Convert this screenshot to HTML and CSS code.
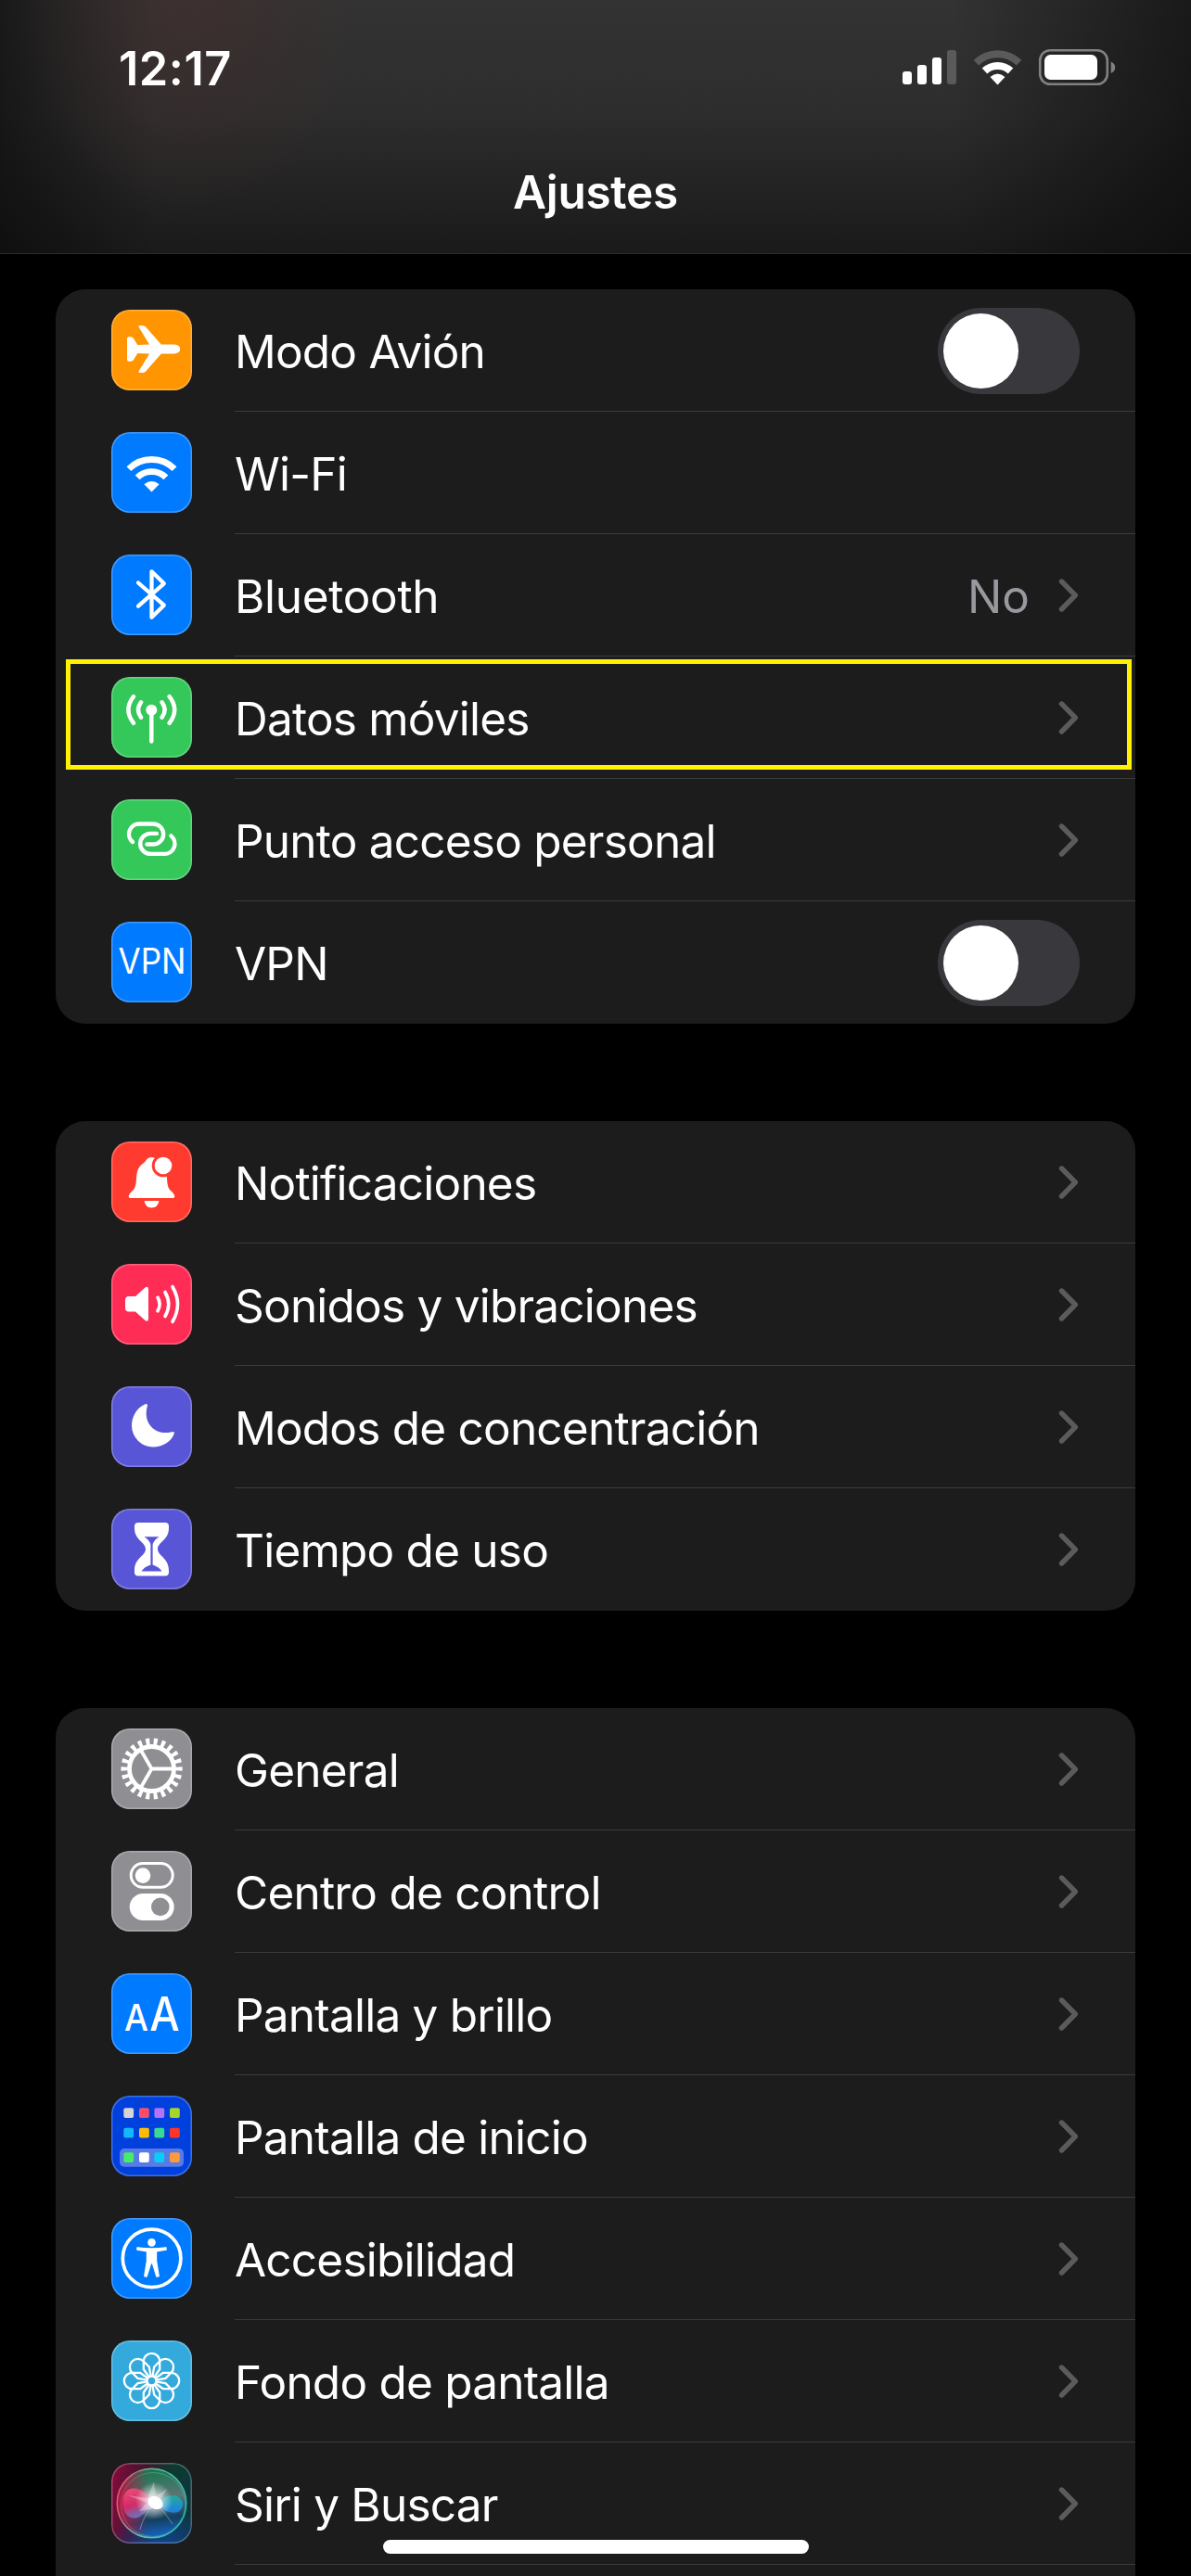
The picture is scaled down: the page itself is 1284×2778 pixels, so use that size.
FILE: index.html
```html
<!DOCTYPE html>
<html lang="es">
<head>
<meta charset="utf-8">
<title>Ajustes</title>
<link rel="stylesheet" href="styles.css">
</head>
<body>
<svg width="0" height="0" class="defs" aria-hidden="true">
  <defs>
    <symbol id="chevron" viewBox="0 0 22 38"><path d="M3.5 4 18.3 19 3.5 34" fill="none" stroke="#5b5b5d" stroke-width="5.4" stroke-linecap="round" stroke-linejoin="round"/></symbol>
    <path id="petal" d="M40.7 39.4 34.8 31V22.5A8.7 8.7 0 0 1 52.2 22.5V31L46.3 39.4"/>
  </defs>
</svg>
<header class="header">
  <div class="status">
    <span class="time">12:17</span>
    <svg class="status-icons" width="232" height="44" viewBox="971 50 232 44">
      <g fill="#fff"><rect x="973" y="77" width="10" height="14" rx="3"/><rect x="989" y="70" width="10" height="21" rx="3"/><rect x="1005" y="62" width="10" height="29" rx="3"/><rect x="1021" y="54" width="10" height="37" rx="3" fill="#5a5a5a"/></g>
      <g fill="none" stroke-width="8"><path d="M1052.400 67.600A33 33 0 0 1 1098.600 67.600" stroke="#5a5a5a"/><path d="M1061.500 76.500A20.300 20.300 0 0 1 1089.500 76.500" stroke="#fff"/></g>
      <path d="M1075.500 91.500 1067.500 83Q1075.500 76 1083.500 83Z" fill="#fff"/>
      <rect x="1121.200" y="54.200" width="72.600" height="36.600" rx="11" fill="none" stroke="#818181" stroke-width="2.600"/>
      <rect x="1126" y="59" width="57" height="27" rx="6.500" fill="#fff"/>
      <path d="M1197.700 66.500Q1202.200 68.500 1202.200 72.800T1197.700 79Z" fill="#818181"/>
    </svg>
  </div>
  <h1 class="title">Ajustes</h1>
</header>
<main class="list">
  <section class="group">
    <div class="row">
      <span class="icon orange"><svg viewBox="0 0 87 87"><path fill="#fff" d="M17 31q0-1.700 1.700-1.700H21q2 0 3 1.700L28.300 38 41 37.600 29.800 19q-1-2 1-2h2.500q2.300 0 3.800 1.600L53.800 37.600H68q6.200.6 6.200 4.900T68 47.400H53.800L37.100 66.400q-1.500 1.600-3.800 1.600h-2.500q-2 0-1-2L41 47.400 28.300 47 24 54q-1 1.700-3 1.700h-2.300Q17 55.700 17 54Z"/></svg></span>
      <div class="cell"><span class="label">Modo Avión</span><span class="switch"></span></div>
    </div>
    <div class="row">
      <span class="icon blue"><svg viewBox="0 0 87 87"><g fill="none" stroke="#fff" stroke-width="6.800"><path d="M18.900 39.700A34.800 34.800 0 0 1 68.100 39.700"/><path d="M28.100 48.900A21.800 21.800 0 0 1 58.900 48.900"/></g><path fill="#fff" d="M43.500 64.500 35.400 56.300Q43.500 49.600 51.600 56.300Z"/></svg></span>
      <div class="cell"><span class="label">Wi-Fi</span></div>
    </div>
    <div class="row">
      <span class="icon blue"><svg viewBox="0 0 87 87"><path fill="none" stroke="#fff" stroke-width="4.300" stroke-linejoin="round" stroke-linecap="round" d="M29 30.500 56.800 54.700 43.500 67.700V18.300L56.800 31.300 29 55.700"/></svg></span>
      <div class="cell"><span class="label wide">Bluetooth</span><span class="value">No</span><svg class="chevron"><use href="#chevron"/></svg></div>
    </div>
    <div class="row highlighted">
      <span class="icon green"><svg viewBox="0 0 87 87"><circle cx="43.300" cy="35.700" r="6" fill="#fff"/><g fill="none" stroke="#fff" stroke-width="4.500" stroke-linecap="round"><path d="M43.300 36V69.500M32 27.300Q26 35.500 32 43.700M54.600 27.300Q60.600 35.500 54.600 43.700M24 21.200Q12.800 35.500 24 49.800M62.600 21.200Q73.800 35.500 62.600 49.800"/></g></svg></span>
      <div class="cell"><span class="label">Datos móviles</span><svg class="chevron"><use href="#chevron"/></svg></div>
    </div>
    <div class="row">
      <span class="icon green"><svg viewBox="0 0 87 87"><g fill="none" stroke="#fff" stroke-width="4.400" stroke-linecap="round"><path id="link" d="M23 46A11 11 0 0 1 30.200 26.500H45.200A11 11 0 0 1 45.200 48.500H38.500"/><use href="#link" transform="rotate(180 43.700 42.700)"/></g></svg></span>
      <div class="cell"><span class="label">Punto acceso personal</span><svg class="chevron"><use href="#chevron"/></svg></div>
    </div>
    <div class="row">
      <span class="icon blue"><svg viewBox="0 0 87 87"><text x="7.500" y="56" class="glyph" font-size="37.500" textLength="73" lengthAdjust="spacingAndGlyphs">VPN</text></svg></span>
      <div class="cell"><span class="label">VPN</span><span class="switch"></span></div>
    </div>
  </section>

  <section class="group">
    <div class="row">
      <span class="icon red"><svg viewBox="0 0 87 87"><path fill="#fff" d="M43.500 17C38 17 38 21 34.500 23.500 29 27 27.500 32 27 40 26.500 50 25 51 21 55 18.500 57.500 17.500 61 21 61H66C69.500 61 68.500 57.500 66 55 62 51 60.500 50 60 40 59.500 32 58 27 52.500 23.500 49 21 49 17 43.500 17ZM35.500 64H51.500Q50 71.600 43.500 71.600T35.500 64Z"/><circle cx="56" cy="26" r="12.300" fill="#ff3b30"/><circle cx="56" cy="26" r="9.300" fill="#fff"/></svg></span>
      <div class="cell"><span class="label">Notificaciones</span><svg class="chevron"><use href="#chevron"/></svg></div>
    </div>
    <div class="row">
      <span class="icon pink"><svg viewBox="0 0 87 87"><path fill="#fff" d="M19 35H26L36.500 25.500Q40 23.300 40 27.500V59Q40 63.200 36.500 61L26 51.600H19Q15 51.600 15 47.600V39Q15 35 19 35Z"/><path fill="none" stroke="#fff" stroke-width="3.700" stroke-linecap="round" d="M50 36.300Q54.300 43.500 50 50.700M58 30.500Q65.500 43.500 58 56.500M66 24.700Q77 43.500 66 62.300"/></svg></span>
      <div class="cell"><span class="label">Sonidos y vibraciones</span><svg class="chevron"><use href="#chevron"/></svg></div>
    </div>
    <div class="row">
      <span class="icon indigo"><svg viewBox="0 0 87 87"><path fill="#fff" d="M36 19.500Q39.700 18 38.700 22C34 38.500 46 53 64 49.500Q69 48 67.500 51.700C64 60 55 65.400 45 65.400A23 23 0 0 1 22 42.500C22 32 28 23 36 19.500Z"/></svg></span>
      <div class="cell"><span class="label">Modos de concentración</span><svg class="chevron"><use href="#chevron"/></svg></div>
    </div>
    <div class="row">
      <span class="icon indigo"><svg viewBox="0 0 87 87"><path fill="#fff" fill-rule="evenodd" d="M29 15H58Q62 15 62 19V21C62 34 50 36 50 43.500S62 53 62 66.500V68.600Q62 72.600 58 72.600H29Q25 72.600 25 68.600V66.500C25 53 37 51 37 43.500S25 34 25 21V19Q25 15 29 15ZM35.500 30.300Q41.500 34 42.400 39V60.500Q35 63 32.500 67.500H54.500Q52 63 44.600 60.500V39Q45.500 34 51.500 30.300Z"/></svg></span>
      <div class="cell"><span class="label">Tiempo de uso</span><svg class="chevron"><use href="#chevron"/></svg></div>
    </div>
  </section>

  <section class="group">
    <div class="row">
      <span class="icon gray"><svg viewBox="0 0 87 87"><g fill="none" stroke="#fff"><circle cx="43.500" cy="43.500" r="24" stroke-width="4.800"/><circle cx="43.500" cy="43.500" r="29.300" stroke-width="7.600" pathLength="220" stroke-dasharray="4.900 5.100" stroke-dashoffset="2.450"/><path stroke-width="3.800" d="M43.500 43.500H66M43.500 43.500 32.200 24M43.500 43.500 32.200 63"/></g></svg></span>
      <div class="cell"><span class="label">General</span><svg class="chevron"><use href="#chevron"/></svg></div>
    </div>
    <div class="row">
      <span class="icon gray"><svg viewBox="0 0 87 87"><rect x="21.200" y="13.500" width="45" height="25.700" rx="12.850" fill="none" stroke="#fff" stroke-width="3"/><circle cx="34" cy="26.600" r="8.300" fill="#fff"/><rect x="19.700" y="46" width="48" height="29" rx="14.500" fill="#fff"/><circle cx="52.800" cy="60.400" r="9.800" fill="#8e8e93"/></svg></span>
      <div class="cell"><span class="label">Centro de control</span><svg class="chevron"><use href="#chevron"/></svg></div>
    </div>
    <div class="row">
      <span class="icon blue"><svg viewBox="0 0 87 87"><text x="14" y="62" class="glyph medium" font-size="39.500" textLength="26" lengthAdjust="spacingAndGlyphs">A</text><text x="41.200" y="62" class="glyph medium" font-size="51" textLength="32.500" lengthAdjust="spacingAndGlyphs">A</text></svg></span>
      <div class="cell"><span class="label">Pantalla y brillo</span><svg class="chevron"><use href="#chevron"/></svg></div>
    </div>
    <div class="row">
      <span class="icon royal"><svg viewBox="0 0 87 87"><rect x="9" y="57" width="69" height="19.700" rx="5" fill="#587be5"/>
        <rect x="13.300" y="13.300" width="10.800" height="10.800" rx="2" fill="#d5d5d5"/><rect x="30" y="13.300" width="10.800" height="10.800" rx="2" fill="#fb4d69"/><rect x="46.400" y="13.300" width="10.800" height="10.800" rx="2" fill="#b273f8"/><rect x="63" y="13.300" width="10.800" height="10.800" rx="2" fill="#a8d42b"/>
        <rect x="13.300" y="34.800" width="10.800" height="10.800" rx="2" fill="#16b8fc"/><rect x="30" y="34.800" width="10.800" height="10.800" rx="2" fill="#fdbd05"/><rect x="46.400" y="34.800" width="10.800" height="10.800" rx="2" fill="#3bd794"/><rect x="63" y="34.800" width="10.800" height="10.800" rx="2" fill="#fb3528"/>
        <rect x="13.300" y="61.300" width="10.800" height="10.800" rx="2" fill="#43ef68"/><rect x="30" y="61.300" width="10.800" height="10.800" rx="2" fill="#fff"/><rect x="46.400" y="61.300" width="10.800" height="10.800" rx="2" fill="#0acdf6"/><rect x="63" y="61.300" width="10.800" height="10.800" rx="2" fill="#fc9a3c"/></svg></span>
      <div class="cell"><span class="label">Pantalla de inicio</span><svg class="chevron"><use href="#chevron"/></svg></div>
    </div>
    <div class="row">
      <span class="icon blue"><svg viewBox="0 0 87 87"><circle cx="43.600" cy="43.400" r="31.300" fill="none" stroke="#fff" stroke-width="3.700"/><circle cx="43.500" cy="26.400" r="4.300" fill="#fff"/><path fill="#fff" stroke="#fff" stroke-width="1.200" stroke-linejoin="round" d="M27.900 31.800Q43.500 34 59.100 31.800V34.200L48.600 35.800V46L51.300 62.600 48.900 63.200 44.300 48.600H42.700L38.100 63.200 35.700 62.600 38.400 46V35.800L27.900 34.200Z"/></svg></span>
      <div class="cell"><span class="label">Accesibilidad</span><svg class="chevron"><use href="#chevron"/></svg></div>
    </div>
    <div class="row">
      <span class="icon sky"><svg viewBox="0 0 87 87"><g fill="none" stroke="#fff" stroke-width="2.300" stroke-linejoin="round"><circle cx="43.500" cy="43.500" r="4.900"/><use href="#petal"/><use href="#petal" transform="rotate(45 43.500 43.500)"/><use href="#petal" transform="rotate(90 43.500 43.500)"/><use href="#petal" transform="rotate(135 43.500 43.500)"/><use href="#petal" transform="rotate(180 43.500 43.500)"/><use href="#petal" transform="rotate(225 43.500 43.500)"/><use href="#petal" transform="rotate(270 43.500 43.500)"/><use href="#petal" transform="rotate(315 43.500 43.500)"/></g></svg></span>
      <div class="cell"><span class="label">Fondo de pantalla</span><svg class="chevron"><use href="#chevron"/></svg></div>
    </div>
    <div class="row">
      <span class="icon siri"><svg viewBox="0 0 87 87">
        <defs>
          <linearGradient id="rim" x1="0" y1=".3" x2="1" y2=".6"><stop offset="0" stop-color="#f04a70"/><stop offset=".45" stop-color="#5fc79a"/><stop offset="1" stop-color="#2fb7b0"/></linearGradient>
          <linearGradient id="orb" x1=".4" y1="0" x2=".55" y2="1"><stop offset="0" stop-color="#14784f"/><stop offset=".45" stop-color="#5c7474"/><stop offset=".75" stop-color="#14405f"/><stop offset="1" stop-color="#1765c9"/></linearGradient>
          <linearGradient id="orbleft"><stop offset="0" stop-color="#b51445"/><stop offset=".45" stop-color="#b51445" stop-opacity="0"/></linearGradient>
          <radialGradient id="flare"><stop offset="0" stop-color="#fff"/><stop offset=".25" stop-color="#fff" stop-opacity=".95"/><stop offset="1" stop-color="#fff" stop-opacity="0"/></radialGradient>
          <linearGradient id="lobe" x2=".3" y2="1"><stop offset="0" stop-color="#ff5483"/><stop offset=".6" stop-color="#df2868"/><stop offset="1" stop-color="#6b7ccf"/></linearGradient>
          <linearGradient id="lobe2" x2="0" y2="1"><stop offset="0" stop-color="#24a89d"/><stop offset="1" stop-color="#1b80e4"/></linearGradient>
        </defs>
        <circle cx="43.500" cy="43.500" r="37" fill="url(#orb)"/><circle cx="43.500" cy="43.500" r="37" fill="url(#orbleft)"/>
        <path d="M46 43C32 22 14 24 12.500 40S22 64 32 57Q39 52 46 43Z" fill="url(#lobe)" opacity=".85"/>
        <path d="M48 44C60 32 74 32 77.500 44 76 57 62 57 48 44Z" fill="url(#lobe2)"/>
        <path d="M46 44Q34 58 31 72M49 45Q58 53 66 66" stroke="#8ab8df" stroke-width="1" fill="none" opacity=".6"/>
        <circle cx="46" cy="41" r="20" fill="url(#flare)" opacity=".75"/>
        <path d="M46 20 48 36 60 28 52 41 57 47 47 49 30 52 38 43 18 35 39 38Z" fill="#fff" opacity=".3"/>
        <ellipse cx="47.500" cy="43" rx="8.500" ry="6.500" transform="rotate(28 47.500 43)" fill="#fff"/>
        <circle cx="43.500" cy="43.500" r="37.300" fill="none" stroke="url(#rim)" stroke-width="1.500"/>
        <circle cx="45" cy="45" r="34.500" fill="none" stroke="url(#rim)" stroke-width="1" opacity=".5"/>
      </svg></span>
      <div class="cell"><span class="label">Siri y Buscar</span><svg class="chevron"><use href="#chevron"/></svg></div>
    </div>
    <div class="row"></div>
  </section>
</main>
<div class="home-indicator"></div>
</body>
</html>
```
FILE: styles.css
```css
*,
*::before,
*::after { box-sizing: border-box; }

body {
  position: relative;
  display: flex;
  flex-direction: column;
  width: 1284px;
  height: 2778px;
  margin: 0;
  overflow: hidden;
  background: #000;
  color: #fff;
  font-family: Inter, "Liberation Sans", sans-serif;
}

.defs { display: none; }

.header {
  flex: none;
  display: flex;
  flex-direction: column;
  height: 274px;
  border-bottom: 1px solid #2b2b2b;
  background:
    radial-gradient(ellipse 190px 230px at 205px 10px, rgba(78, 42, 42, .38), transparent),
    linear-gradient(90deg, rgba(8, 8, 8, .6), rgba(8, 8, 8, 0) 13%, rgba(8, 8, 8, 0) 80%, rgba(8, 8, 8, .6)),
    linear-gradient(#333, #2d2d2d 45%, #1a1a1a);
}

.status {
  display: flex;
  align-items: center;
  justify-content: space-between;
  height: 146px;
  padding: 0 81px 0 128px;
}

.time {
  font-size: 50.5px;
  font-weight: 600;
  letter-spacing: 0.5px;
}

.status-icons { margin-bottom: 2px; }

.title {
  margin: 0;
  padding-top: 31px;
  font-size: 49.5px;
  font-weight: 600;
  line-height: 60px;
  letter-spacing: -0.3px;
  text-align: center;
}

.list {
  flex: none;
  display: flex;
  flex-direction: column;
  gap: 105px;
  padding: 38px 60px 0;
}

.group {
  overflow: hidden;
  border-radius: 32px;
  background: #1c1c1c;
}

.row {
  position: relative;
  display: flex;
  align-items: center;
  gap: 46px;
  height: 132px;
  padding-left: 60px;
}

.cell {
  flex: 1;
  display: flex;
  align-items: center;
  height: 132px;
  padding-right: 60px;
  border-bottom: 1px solid #3b3b3c;
}

.row:last-child .cell { border-bottom-color: transparent; }

.label {
  flex: 1;
  padding-top: 3px;
  font-size: 49.5px;
  line-height: 60px;
  letter-spacing: -0.78px;
  white-space: nowrap;
}

.label.wide { letter-spacing: -0.3px; }

.value {
  margin-right: 31px;
  padding-top: 3px;
  color: #98989e;
  font-size: 49.5px;
  line-height: 60px;
}

.chevron {
  width: 22px;
  height: 38px;
  margin-right: 1px;
}

.icon {
  position: relative;
  flex: none;
  width: 87px;
  height: 87px;
  margin-top: -1px;
  border-radius: 20px;
  box-shadow: inset 0 0 0 1.5px rgba(255, 255, 255, .25);
}

.icon svg { display: block; width: 87px; height: 87px; }

.glyph { fill: #fff; font-family: Inter, sans-serif; }
.glyph.medium { font-weight: 500; }

.orange { background-color: #ff9500; }
.blue { background-color: #007aff; }
.green { background-color: #34c759; }
.red { background-color: #ff3b30; }
.pink { background-color: #ff2d55; }
.indigo { background-color: #5856d6; }
.gray { background-color: #8e8e93; }
.royal { background-color: #0040dd; }
.sky { background-color: #34aadc; }
.siri {
  background:
    radial-gradient(circle at 60% 115%, #1244a8, transparent 50%),
    linear-gradient(100deg, #8c0a3c, #42152e 35%, #0c3a30 65%, #0d3540);
}

.switch {
  width: 153px;
  height: 93px;
  margin-top: 1px;
  padding: 6px;
  border-radius: 47px;
  background: #39393d;
}

.switch::before {
  content: "";
  display: block;
  width: 81px;
  height: 81px;
  border-radius: 50%;
  background: #fff;
}

.highlighted::after {
  content: "";
  position: absolute;
  top: 3px;
  left: 11px;
  width: 1149px;
  height: 119px;
  border: 5px solid #fff100;
}

.home-indicator {
  position: absolute;
  bottom: 24px;
  left: 413px;
  width: 459px;
  height: 15px;
  border-radius: 8px;
  background: #fff;
}
```
